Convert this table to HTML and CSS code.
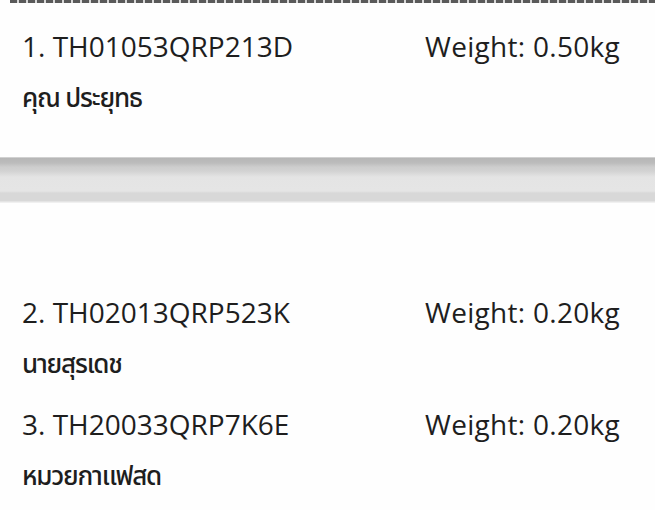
FILE: index.html
```html
<!DOCTYPE html>
<html lang="th">
<head>
<meta charset="utf-8">
<link rel="stylesheet" href="styles.css">
</head>
<body>
<div class="dash"></div>
<section class="group first">
  <div class="item">
    <div class="row"><span class="code">1. TH01053QRP213D</span><span class="weight">Weight: 0.50kg</span></div>
    <div class="name">คุณ ประยุทธ</div>
  </div>
</section>
<div class="band"></div>
<section class="group second">
  <div class="item">
    <div class="row"><span class="code">2. TH02013QRP523K</span><span class="weight">Weight: 0.20kg</span></div>
    <div class="name">นายสุรเดช</div>
  </div>
  <div class="item">
    <div class="row"><span class="code">3. TH20033QRP7K6E</span><span class="weight">Weight: 0.20kg</span></div>
    <div class="name">หมวยกาแฟสด</div>
  </div>
</section>
</body>
</html>
```
FILE: styles.css
```css
html, body { margin: 0; padding: 0; background: #fefefe; }
body {
  width: 655px;
  height: 510px;
  overflow: hidden;
  font-family: "Open Sans", "Noto Sans", "Noto Sans Thai", sans-serif;
  color: #1e1e1e;
}
.dash {
  height: 3px;
  margin-left: 10px;
  background: repeating-linear-gradient(90deg, #5a5a5a 0 7px, #d8d8d8 7px 9px);
}
.group { padding: 0 22px; }
.first { padding-top: 26px; height: 154px; box-sizing: border-box; }
.second { padding-top: 92px; }
.row {
  display: grid;
  grid-template-columns: 403px auto;
  align-items: baseline;
  font-size: 28px;
  line-height: 34px;
}
.weight { letter-spacing: 0.3px; }
.name {
  font-size: 26px;
  font-weight: 500;
  letter-spacing: -1.2px;
  line-height: 36px;
  margin-top: 16px;
}
.item + .item { margin-top: 26px; }
.band {
  height: 46px;
  background: linear-gradient(180deg, #ececec 0px, #b6b6b6 1px, #bcbcbc 6px, #cdcdcd 10px, #d2d2d2 14px, #e4e4e4 20px, #e5e5e5 34px, #d8d8d8 36px, #d8d8d8 44px, #f0f0f0 45px);
}
```
